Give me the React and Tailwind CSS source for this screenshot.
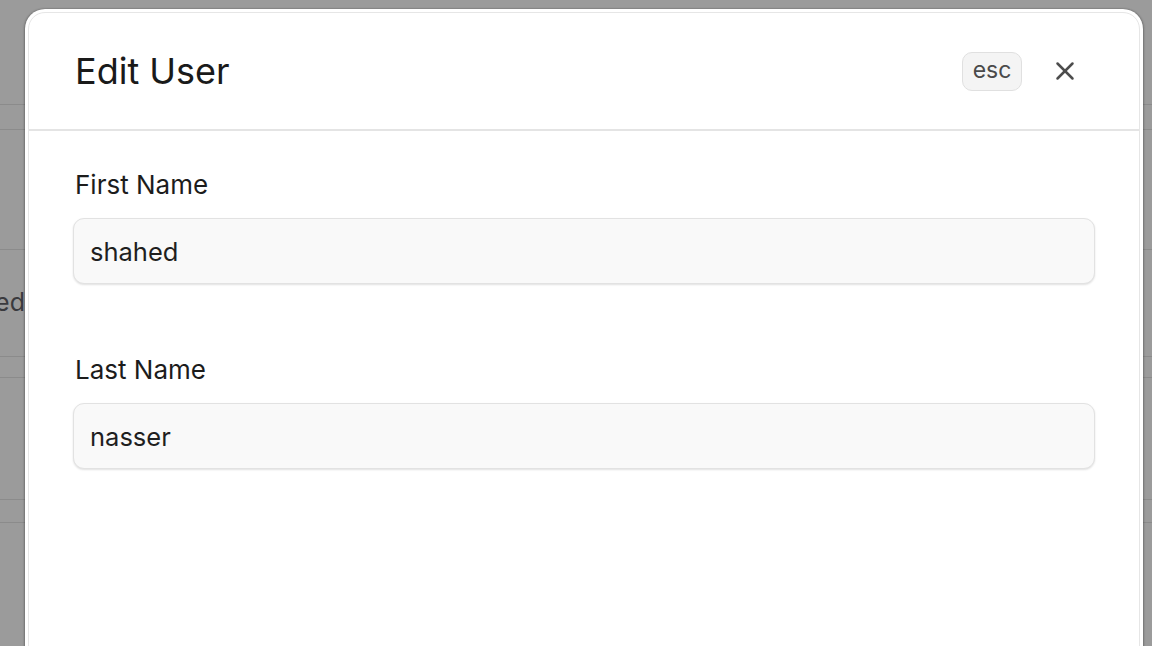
import { X } from "lucide-react";

const font = { fontFamily: "Inter, 'Noto Sans', sans-serif" };

function Field({ label, value }) {
  return (
    <div className="flex flex-col">
      <label className="text-[26px] text-[#1c1c1c] leading-[32px] mb-[17px] pl-[2px]">
        {label}
      </label>
      <input
        readOnly
        value={value}
        className="h-[66px] w-full rounded-[11px] border border-[#e2e2e2] bg-[#f9f9f9] px-[16px] text-[25.5px] text-[#1f1f1f] shadow-[0_1px_2px_rgba(0,0,0,0.12)] outline-none"
      />
    </div>
  );
}

export default function App() {
  return (
    <div className="relative h-screen overflow-hidden bg-[#9b9b9b]" style={font}>
      {/* page behind the overlay */}
      <div className="flex flex-col">
        <div className="h-[105px] border-b border-[#8b8b8b]" />
        <div className="h-[25px] border-b border-[#8b8b8b]" />
        <div className="h-[120px] border-b border-[#8b8b8b]" />
        <div className="h-[107px] border-b border-[#8b8b8b] flex items-center">
          <div className="w-[25px] flex justify-end overflow-hidden whitespace-nowrap text-[25px] text-[#3a3a3e]">
            Verified
          </div>
        </div>
        <div className="h-[21px] border-b border-[#8b8b8b]" />
        <div className="h-[122px] border-b border-[#8b8b8b]" />
        <div className="h-[23px] border-b border-[#8b8b8b]" />
      </div>

      {/* modal */}
      <div className="absolute left-[25px] top-[9px] w-[1118px] h-[680px] rounded-[20px] bg-white p-[3px] shadow-[-1px_0_2px_rgba(0,0,0,0.25),1px_0_2px_rgba(0,0,0,0.25)]">
        <div className="h-full rounded-[17px] border border-[#e6e6e6] bg-white">
          <div className="h-[118px] flex items-center justify-between border-b-2 border-[#e4e4e4] pl-[46px] pr-[59px]">
            <h2 className="text-[36px] text-[#1a1a1a] leading-none">Edit User</h2>
            <div className="flex items-center gap-[28px]">
              <span className="h-[39px] w-[60px] flex items-center justify-center rounded-[10px] border border-[#e0e0e0] bg-[#f4f4f4] text-[23px] text-[#4a4a4a] leading-none pb-[2px]">
                esc
              </span>
              <button className="text-[#4d4d4d]">
                <X size={30} strokeWidth={2} />
              </button>
            </div>
          </div>
          <div className="px-[44px] pt-[38px] flex flex-col gap-[70px]">
            <Field label="First Name" value="shahed" />
            <Field label="Last Name" value="nasser" />
          </div>
        </div>
      </div>
    </div>
  );
}
